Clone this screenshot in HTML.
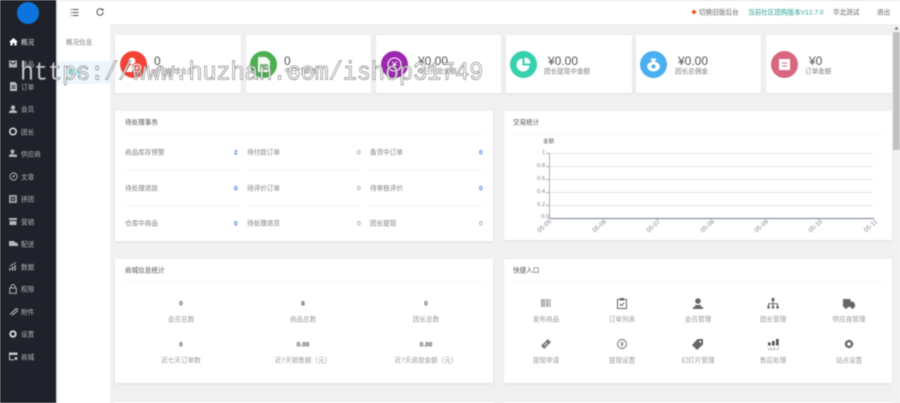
<!DOCTYPE html>
<html lang="zh"><head><meta charset="utf-8"><title>概况</title>
<style>
html,body{margin:0;padding:0;background:#fff}
#w{position:relative;width:900px;height:403px;overflow:hidden;background:#f0f0f0;font-family:"Liberation Sans","Noto Sans CJK SC",sans-serif;filter:blur(.45px)}
#w div{position:absolute}
.t{position:absolute;white-space:nowrap;line-height:1;transform:translateY(-50%);font-size:6.6px;color:#808080;margin-top:1.6px}
.c{transform:translate(-50%,-50%);text-align:center}
.m{color:#b4b7bd;font-size:6.6px;left:21px}
.p{background:#fff;box-shadow:0 1px 3px rgba(0,0,0,.07)}
.h{background:#f3f3f3;height:1px}
.v{font-size:12px;color:#555;margin-top:.5px}
.b{color:#4a78e8;font-weight:bold}
.n{font-weight:bold;color:#555;font-size:6.6px}
.g{background:#e4e4e4;height:1px;left:549px;width:324px}
.k{background:#aaa;height:1px;left:546px;width:3px}
.x{position:absolute;font-size:6.3px;color:#8a8a8a;white-space:nowrap;line-height:1;transform:translate(-100%,0) rotate(-42deg);transform-origin:100% 0}
svg{position:absolute}
</style></head><body>
<div id="w">
<div style="left:0;top:0;width:900px;height:1px;background:#e9e9e9"></div>
<div style="left:57px;top:1px;width:843px;height:23px;background:#fff"></div>
<div style="left:57px;top:24px;width:53px;height:379px;background:#fff"></div>
<div style="left:57px;top:61px;width:53px;height:23px;background:#eef6fd"></div>
<div style="left:0;top:0;width:56px;height:403px;background:#1f222b;box-shadow:1px 0 1px rgba(0,0,0,.15)"></div>
<div style="left:17px;top:2px;width:22px;height:22px;border-radius:50%;background:#0b74de"></div>

<svg style="left:9px;top:37px" width="9" height="9" viewBox="0 0 9 9"><path d="M4.5 1L9 5H7.6V8.5H5.4V6H3.6V8.5H1.4V5H0z" fill="#fff"/></svg>
<span class="t m" style="top:42px;color:#e4e6ea">概况</span>
<svg style="left:9px;top:60px" width="8" height="8" viewBox="0 0 8 8"><rect width="8" height="7" y=".5" fill="#aeb1b6"/><path d="M1 2l3 2 3-2" stroke="#1f222b" fill="none"/></svg>
<span class="t m" style="top:64px">商品</span>
<svg style="left:10px;top:82px" width="7" height="9" viewBox="0 0 7 9"><path d="M0 0H5L7 2V9H0z" fill="#b5b8bd"/><path d="M1.5 4H5.5M1.5 6H5.5" stroke="#1f222b"/></svg>
<span class="t m" style="top:87px">订单</span>
<svg style="left:9px;top:105px" width="8" height="8" viewBox="0 0 8 8"><circle cx="4" cy="2.5" r="2.2" fill="#b5b8bd"/><path d="M0 8V6.4L2.5 5H5.5L8 6.4V8z" fill="#b5b8bd"/></svg>
<span class="t m" style="top:109px">会员</span>
<svg style="left:9px;top:127px" width="8" height="9" viewBox="0 0 8 9"><circle cx="4" cy="4.5" r="3.2" fill="none" stroke="#d2d4d8" stroke-width="1.6"/></svg>
<span class="t m" style="top:132px">团长</span>
<svg style="left:9px;top:149px" width="8" height="9" viewBox="0 0 8 9"><circle cx="3.5" cy="2.5" r="2" fill="#aeb1b6"/><path d="M0 8V6L2 5H5V8zM5 5.5H8V8H5z" fill="#aeb1b6"/></svg>
<span class="t m" style="top:154px">供应商</span>
<svg style="left:9px;top:172px" width="9" height="9" viewBox="0 0 9 9"><circle cx="4.5" cy="4.5" r="3.6" fill="none" stroke="#aeb1b6"/><path d="M3 6L4 3.5 6.5 2.5 5 5z" fill="#aeb1b6"/></svg>
<span class="t m" style="top:177px">文章</span>
<svg style="left:9px;top:195px" width="8" height="8" viewBox="0 0 8 8"><rect width="8" height="8" fill="#9a9da3"/><rect x="2" y="2" width="4" height="4" fill="#1f222b"/><rect x="3" y="3" width="2" height="2" fill="#9a9da3"/></svg>
<span class="t m" style="top:199px">拼团</span>
<svg style="left:9px;top:217px" width="8" height="9" viewBox="0 0 8 9"><path d="M0 1H8V3H0zM.5 4H7.5V8H.5z" fill="#b5b8bd"/></svg>
<span class="t m" style="top:222px">营销</span>
<svg style="left:9px;top:241px" width="9" height="6" viewBox="0 0 9 6"><path d="M0 0H5.5V1.5H7.5L9 3V5H0z" fill="#b5b8bd"/></svg>
<span class="t m" style="top:244px">配送</span>
<svg style="left:9px;top:262px" width="9" height="9" viewBox="0 0 9 9"><path d="M1 8.5V6M3.5 8.5V4.5M6 8.5V3" stroke="#aeb1b6" stroke-width="1.5"/><path d="M1 4L7 .5" stroke="#aeb1b6"/></svg>
<span class="t m" style="top:267px">数据</span>
<svg style="left:9px;top:284px" width="8" height="10" viewBox="0 0 8 10"><rect x=".7" y="4" width="6.6" height="5.3" fill="none" stroke="#aeb1b6"/><path d="M2 4V2.5a2 2 0 014 0V4" fill="none" stroke="#aeb1b6"/></svg>
<span class="t m" style="top:289px">权限</span>
<svg style="left:9px;top:308px" width="9" height="8" viewBox="0 0 9 8"><path d="M1 6.5L6.5 1.2a1.2 1.2 0 012 1.6L3 7.3" fill="none" stroke="#aeb1b6" stroke-width="1.2"/></svg>
<span class="t m" style="top:312px">附件</span>
<svg style="left:9px;top:330px" width="8" height="8" viewBox="0 0 8 8"><circle cx="4" cy="4" r="2.7" fill="none" stroke="#d2d4d8" stroke-width="2"/></svg>
<span class="t m" style="top:334px">设置</span>
<svg style="left:9px;top:352px" width="9" height="9" viewBox="0 0 9 9"><path d="M0 .5H8.5V3H0z" fill="#c5c7cc"/><path d="M.5 3V7.7H5" fill="none" stroke="#c5c7cc"/><circle cx="7" cy="6.5" r="1.5" fill="#c5c7cc"/></svg>
<span class="t m" style="top:357px">商城</span>

<svg style="left:70px;top:9px" width="9" height="7" viewBox="0 0 9 7"><path d="M2.5 .5H8.5M2.5 3.5H8.5M2.5 6.5H8.5M.5 .5H1.5M.5 3.5H1.5M.5 6.5H1.5" stroke="#555" fill="none"/></svg>
<svg style="left:96px;top:8px" width="8" height="8" viewBox="0 0 8 8"><path d="M6.8 2.2A3.2 3.2 0 104 7.2 3.2 3.2 0 007.2 4" fill="none" stroke="#555" stroke-width="1"/><path d="M5 2.6H7.6V.4z" fill="#555"/></svg>
<div style="left:692px;top:10px;width:4px;height:4px;border-radius:50%;background:#f4511e"></div>
<span class="t" style="left:699px;top:12px;color:#666">切换旧版后台</span>
<span class="t" style="left:748px;top:12px;color:#2aa198">当前社区团购版本V12.7.0</span>
<span class="t" style="left:833px;top:12px;color:#666">华北测试</span>
<span class="t" style="left:877px;top:12px;color:#666">退出</span>

<span class="t" style="left:66px;top:42px">概况信息</span>
<span class="t" style="left:68px;top:72px;color:#37b5ad">概况</span>

<!-- stat cards -->
<div class="p" style="left:115px;top:35px;width:126px;height:58px"></div>
<div class="p" style="left:246px;top:35px;width:125px;height:58px"></div>
<div class="p" style="left:376px;top:35px;width:125px;height:58px"></div>
<div class="p" style="left:506px;top:35px;width:126px;height:58px"></div>
<div class="p" style="left:636px;top:35px;width:125px;height:58px"></div>
<div class="p" style="left:766px;top:35px;width:126px;height:58px"></div>

<svg style="left:120px;top:51px" width="27" height="27" viewBox="0 0 27 27"><circle cx="13.5" cy="13.5" r="13.5" fill="#f44336"/><circle cx="12" cy="10" r="3.4" fill="#fff"/><path d="M6 21L10 14H14L12 21z" fill="#fff"/><circle cx="17" cy="17" r="3.8" fill="none" stroke="#fff" stroke-width="1.2"/><path d="M17 15V19M15 17H19" stroke="#fff"/></svg>
<span class="t v" style="left:154px;top:60px">0</span><span class="t" style="left:154px;top:71px">今日新增会员</span>
<svg style="left:250px;top:51px" width="27" height="27" viewBox="0 0 27 27"><circle cx="13.5" cy="13.5" r="13.5" fill="#4caf50"/><path d="M8 6H16L20 10V21H8z" fill="#fff" opacity=".95"/><rect x="10" y="13" width="8" height="6" fill="#7dbd80"/></svg>
<span class="t v" style="left:284px;top:60px">0</span><span class="t" style="left:284px;top:71px">今日订单数</span>
<svg style="left:381px;top:51px" width="27" height="27" viewBox="0 0 27 27"><circle cx="13.5" cy="13.5" r="13.5" fill="#9c27b0"/><circle cx="13.5" cy="13.5" r="6.5" fill="none" stroke="#fff" stroke-width="1.1"/><path d="M11.2 10.5L13.5 13.5 15.8 10.5M13.5 13.5V17M11.5 14H15.5" stroke="#fff" fill="none" stroke-width=".9"/></svg>
<span class="t v" style="left:418px;top:60px">¥0.00</span><span class="t" style="left:417px;top:71px">今日付款金额</span>
<svg style="left:510px;top:51px" width="27" height="27" viewBox="0 0 27 27"><circle cx="13.5" cy="13.5" r="13.5" fill="#36d1ae"/><path d="M12.5 7.5A6.5 6.5 0 1019.5 14.5H12.5z" fill="#fff"/><path d="M14.5 6.5A6 6 0 0120.5 12.5H14.5z" fill="#fff"/></svg>
<span class="t v" style="left:548px;top:60px">¥0.00</span><span class="t" style="left:544px;top:71px">团长提现中金额</span>
<svg style="left:640px;top:51px" width="27" height="27" viewBox="0 0 27 27"><circle cx="13.5" cy="13.5" r="13.5" fill="#4aaef0"/><path d="M10.5 7.5H16.5L15 10.5H12z" fill="#fff"/><ellipse cx="13.5" cy="15.5" rx="6.3" ry="5" fill="#fff"/><circle cx="13.5" cy="15.5" r="2" fill="#4aaef0"/></svg>
<span class="t v" style="left:678px;top:60px">¥0.00</span><span class="t" style="left:675px;top:71px">团长总佣金</span>
<svg style="left:771px;top:51px" width="27" height="27" viewBox="0 0 27 27"><circle cx="13.5" cy="13.5" r="13.5" fill="#d9667f"/><rect x="8" y="8" width="11" height="11" fill="#fff"/><path d="M11 12H16M11 15H16" stroke="#d9667f"/></svg>
<span class="t v" style="left:809px;top:60px">¥0</span><span class="t" style="left:805px;top:71px">订单金额</span>

<!-- pending panel -->
<div class="p" style="left:115px;top:111px;width:378px;height:130px"></div>
<span class="t" style="left:125px;top:122px;color:#555">待处理事务</span>
<div class="h" style="left:125px;top:134px;width:358px"></div>
<div class="h" style="left:125px;top:170px;width:113px"></div><div class="h" style="left:247px;top:170px;width:114px"></div><div class="h" style="left:370px;top:170px;width:113px"></div>
<div class="h" style="left:125px;top:205px;width:113px"></div><div class="h" style="left:247px;top:205px;width:114px"></div><div class="h" style="left:370px;top:205px;width:113px"></div>
<span class="t" style="left:125px;top:152px">商品库存预警</span><span class="t b" style="left:234px;top:152px">2</span>
<span class="t" style="left:247px;top:152px">待付款订单</span><span class="t" style="left:357px;top:152px">0</span>
<span class="t" style="left:370px;top:152px">备货中订单</span><span class="t b" style="left:479px;top:152px">0</span>
<span class="t" style="left:125px;top:188px">待处理退款</span><span class="t b" style="left:234px;top:188px">0</span>
<span class="t" style="left:247px;top:188px">待评价订单</span><span class="t" style="left:357px;top:188px">0</span>
<span class="t" style="left:370px;top:188px">待审核评价</span><span class="t b" style="left:479px;top:188px">0</span>
<span class="t" style="left:125px;top:223px">仓库中商品</span><span class="t b" style="left:234px;top:223px">0</span>
<span class="t" style="left:247px;top:223px">待处理退货</span><span class="t" style="left:357px;top:223px">0</span>
<span class="t" style="left:370px;top:223px">团长提现</span><span class="t" style="left:479px;top:223px">0</span>

<!-- chart panel -->
<div class="p" style="left:504px;top:111px;width:388px;height:129px"></div>
<span class="t" style="left:513px;top:122px;color:#555">交易统计</span>
<div class="h" style="left:513px;top:134px;width:370px"></div>
<span class="t" style="left:543px;top:141px;font-size:5.6px;color:#666">金额</span>
<div class="g" style="top:153px"></div><div class="g" style="top:166px"></div><div class="g" style="top:179px"></div><div class="g" style="top:192px"></div><div class="g" style="top:205px"></div>
<div class="k" style="top:153px"></div><div class="k" style="top:166px"></div><div class="k" style="top:179px"></div><div class="k" style="top:192px"></div><div class="k" style="top:205px"></div>
<div style="left:549px;top:153px;width:1.4px;height:65px;background:#b0b0b0"></div>
<div style="left:549px;top:218px;width:325px;height:1.4px;background:#6f8191"></div>
<span class="t" style="left:542px;top:152px;font-size:5.8px">1</span>
<span class="t" style="left:537px;top:165px;font-size:5.8px">0.8</span>
<span class="t" style="left:537px;top:178px;font-size:5.8px">0.6</span>
<span class="t" style="left:537px;top:191px;font-size:5.8px">0.4</span>
<span class="t" style="left:537px;top:204px;font-size:5.8px">0.2</span>
<span class="t" style="left:541px;top:216px;font-size:5.8px">0.0</span>
<span class="x" style="left:549px;top:219px">05-05</span>
<span class="x" style="left:604px;top:219px">05-06</span>
<span class="x" style="left:658px;top:219px">05-07</span>
<span class="x" style="left:712px;top:219px">05-08</span>
<span class="x" style="left:766px;top:219px">05-09</span>
<span class="x" style="left:820px;top:219px">05-10</span>
<span class="x" style="left:875px;top:219px">05-11</span>

<!-- shop stats -->
<div class="p" style="left:115px;top:259px;width:378px;height:124px"></div>
<span class="t" style="left:125px;top:270px;color:#555">商城信息统计</span>
<div class="h" style="left:125px;top:281px;width:358px"></div>
<span class="t c n" style="left:181px;top:303px">0</span><span class="t c" style="left:181px;top:319px;color:#999">会员总数</span>
<span class="t c n" style="left:303px;top:303px">8</span><span class="t c" style="left:303px;top:319px;color:#999">商品总数</span>
<span class="t c n" style="left:426px;top:303px">0</span><span class="t c" style="left:426px;top:319px;color:#999">团长总数</span>
<span class="t c n" style="left:181px;top:344px">0</span><span class="t c" style="left:181px;top:360px;color:#999">近七天订单数</span>
<span class="t c n" style="left:303px;top:344px">0.00</span><span class="t c" style="left:303px;top:360px;color:#999">近7天销售额（元）</span>
<span class="t c n" style="left:426px;top:344px">0.00</span><span class="t c" style="left:426px;top:360px;color:#999">近7天退款金额（元）</span>

<!-- shortcuts -->
<div class="p" style="left:504px;top:259px;width:388px;height:124px"></div>
<span class="t" style="left:513px;top:270px;color:#555">快捷入口</span>
<div class="h" style="left:513px;top:281px;width:370px"></div>
<svg style="left:541px;top:299px" width="10" height="8" viewBox="0 0 10 8"><path d="M.5 0V8M2 0V8M3.5 0V8M5.5 0V8M7 0V8M9 0V8" stroke="#888" stroke-width=".9"/></svg>
<span class="t c" style="left:546px;top:319px;color:#999">发布商品</span>
<svg style="left:617px;top:298px" width="10" height="11" viewBox="0 0 10 11"><rect x=".5" y="1.5" width="9" height="9" fill="none" stroke="#666"/><rect x="3" y="0" width="4" height="2.5" fill="#666"/><path d="M2.8 6L4.5 7.7 7.3 4.6" fill="none" stroke="#666"/></svg>
<span class="t c" style="left:622px;top:319px;color:#999">订单列表</span>
<svg style="left:692px;top:298px" width="12" height="11" viewBox="0 0 12 11"><circle cx="6" cy="3" r="2.8" fill="#666"/><path d="M3 7H9V9H11V11H1V9H3z" fill="#666"/></svg>
<span class="t c" style="left:698px;top:319px;color:#999">会员管理</span>
<svg style="left:767px;top:298px" width="12" height="11" viewBox="0 0 12 11"><path d="M6 3V6M1.5 8V5.7H10.5V8M6 6V8" fill="none" stroke="#666"/><rect x="4.5" y="0" width="3" height="3" fill="#666"/><rect x=".3" y="8" width="2.4" height="2.6" fill="#666"/><rect x="4.8" y="8" width="2.4" height="2.6" fill="#666"/><rect x="9.3" y="8" width="2.4" height="2.6" fill="#666"/></svg>
<span class="t c" style="left:773px;top:319px;color:#999">团长管理</span>
<svg style="left:843px;top:299px" width="12" height="10" viewBox="0 0 12 10"><path d="M0 0H7.5V2.5H10L12 5V8H0z" fill="#666"/><circle cx="3" cy="8.3" r="1.5" fill="#666"/><circle cx="9.5" cy="8.3" r="1.5" fill="#666"/></svg>
<span class="t c" style="left:849px;top:319px;color:#999">供应商管理</span>
<svg style="left:541px;top:339px" width="10" height="10" viewBox="0 0 10 10"><path d="M0 6.8L6.8 0 10 3.2 3.2 10z" fill="#777"/><path d="M3 5L5 7M4.5 3.5L6.5 5.5" stroke="#fff" stroke-width=".6"/></svg>
<span class="t c" style="left:546px;top:360px;color:#999">提现申请</span>
<svg style="left:617px;top:339px" width="10" height="10" viewBox="0 0 10 10"><circle cx="5" cy="5" r="4.5" fill="none" stroke="#666" stroke-width=".9"/><path d="M3.6 3L5 5 6.4 3M5 5V7.5M3.7 5.6H6.3" fill="none" stroke="#666" stroke-width=".7"/></svg>
<span class="t c" style="left:622px;top:360px;color:#999">提现设置</span>
<svg style="left:692px;top:339px" width="11" height="11" viewBox="0 0 11 11"><path d="M5.5 0H11V5.5L5 11 0 6z" fill="#666"/><circle cx="8.3" cy="2.7" r="1" fill="#fff"/></svg>
<span class="t c" style="left:698px;top:360px;color:#999">幻灯片管理</span>
<svg style="left:768px;top:339px" width="11" height="11" viewBox="0 0 11 11"><rect x="0" y="3.5" width="2.7" height="3" fill="#555"/><rect x="4" y="2" width="2.7" height="4.5" fill="#555"/><rect x="8" y="0" width="2.7" height="6.5" fill="#555"/><path d="M0 7.5V10.5H10.7V7.5M2.7 7.5V10.5M6 7.5V10.5" fill="none" stroke="#aaa" stroke-width=".7"/></svg>
<span class="t c" style="left:773px;top:360px;color:#999">售后处理</span>
<svg style="left:844px;top:339px" width="10" height="10" viewBox="0 0 10 10"><path d="M5 .3L6.2 1.6 8 1.5 8.3 3.3 9.7 5 8.3 6.7 8 8.5 6.2 8.4 5 9.7 3.8 8.4 2 8.5 1.7 6.7.3 5 1.7 3.3 2 1.5 3.8 1.6z" fill="#666"/><circle cx="5" cy="5" r="1.8" fill="#fff"/></svg>
<span class="t c" style="left:849px;top:360px;color:#999">站点设置</span>

<!-- next row -->
<div class="p" style="left:115px;top:402px;width:378px;height:10px"></div>
<div class="p" style="left:504px;top:402px;width:388px;height:10px"></div>

<!-- scrollbar -->
<div style="left:893px;top:24px;width:7px;height:379px;background:#f1f1f1"></div>
<div style="left:893px;top:32px;width:7px;height:118px;background:#c1c1c1"></div>
<svg style="left:894px;top:26px" width="5" height="4" viewBox="0 0 5 4"><path d="M2.5 .5L4.5 3.5H.5z" fill="#777"/></svg>

<!-- watermark -->
<span style="position:absolute;left:20px;top:58px;font-family:'Liberation Mono',monospace;font-size:23.4px;line-height:28px;white-space:nowrap;color:rgba(255,255,255,.8);-webkit-text-stroke:.5px #666;transform:scaleY(1.12);transform-origin:0 0">https://www.huzhan.com/ishop31749</span>
</div>
</body></html>
